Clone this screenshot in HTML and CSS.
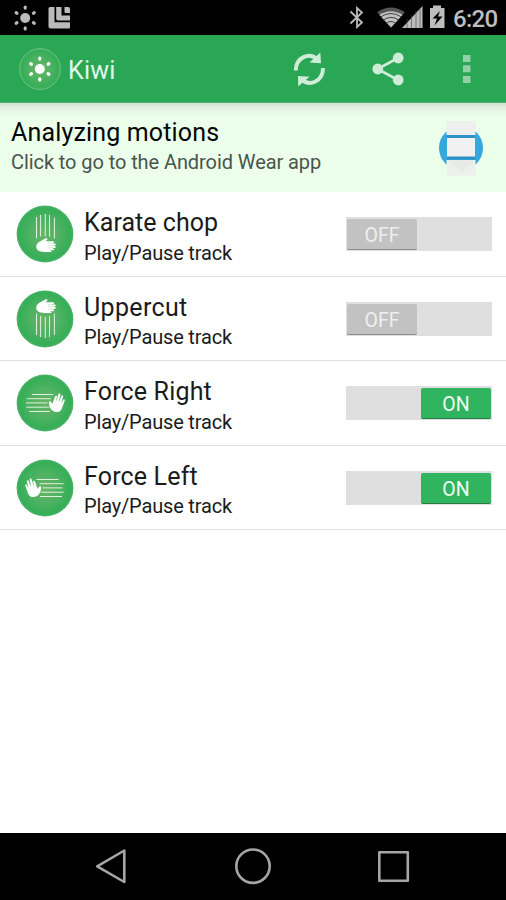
FILE: index.html
```html
<!DOCTYPE html>
<html lang="en">
<head>
<meta charset="utf-8">
<title>Kiwi</title>
<link rel="stylesheet" href="styles.css">
</head>
<body>
<svg class="defs" width="0" height="0" aria-hidden="true">
  <defs>
    <radialGradient id="disc"><stop offset="0" stop-color="#69b465"/><stop offset=".55" stop-color="#4db262"/><stop offset=".9" stop-color="#36ae57"/><stop offset="1" stop-color="#4bb266"/></radialGradient>
    <symbol id="sun" viewBox="0 0 24 26" overflow="visible">
      <circle cx="12" cy="13" r="5"/>
      <ellipse cx="12" cy="2.6" rx="1.6" ry="2.2"/><ellipse cx="12" cy="23.4" rx="1.6" ry="2.2"/>
      <ellipse cx="12" cy="3" rx="1.7" ry="2.1" transform="rotate(60 12 13)"/><ellipse cx="12" cy="3" rx="1.7" ry="2.1" transform="rotate(120 12 13)"/>
      <ellipse cx="12" cy="3" rx="1.7" ry="2.1" transform="rotate(240 12 13)"/><ellipse cx="12" cy="3" rx="1.7" ry="2.1" transform="rotate(300 12 13)"/>
    </symbol>
    <g id="hand-side">
      <path fill="#fff" d="M0 8.500C.2 5.500 2.500 4 5 2.700L9.600.3c1.400-.5 2.200.6 1.200 1.700L9.300 3.300l7.500-.1c1.400 0 1.500 1.600.2 1.800l-2.500.3 4 .2c1.500 0 1.500 1.800.1 1.900l-3.200.2 3.300.4c1.300.3 1.100 1.900-.2 1.900l-3.400-.1 2.200.6c1.100.4.8 1.800-.3 1.800l-3.200.1 1 .4c1 .4.600 1.400-.4 1.400l-6.500-.2C5 13.800.2 13.400 0 8.500z"/>
      <path class="crease" d="M11.500 5.300h4M11.500 7.600h5M11.500 9.900h4.500"/>
    </g>
    <g id="hand-up">
      <path fill="#fff" d="M.1 8.800C0 7.300 1.800 7.400 2.300 8.500l1 1.600.5-.2L6.200 3c.5-1.400 2.200-.9 1.900.5L7.300 7.200l.4.100L9.500 1c.4-1.500 2.300-1 2 .4L10.200 7.700l.4.100 1.900-5.400c.5-1.300 2.200-.7 1.800.7l-1.600 5.800.4.100 1.200-2.600c.6-1.200 2-.5 1.600.8l-2.300 6.200c-1 3.400-2.900 5.400-5 5.200-3.200.1-5.800-1.300-7-3.800C.7 13.100.1 11.100.1 8.800z"/>
    </g>
  </defs>
</svg>
<div class="screen">
  <div class="status">
    <svg width="506" height="35" viewBox="0 0 506 35">
      <g fill="#bbb">
        <use href="#sun" x="13.200" y="5" width="24" height="26"/>
        <path d="M50 7h4.500v15.300H70V27q0 1.500-1.500 1.500h-18q-2 0-2-2v-18q0-1.500 1.500-1.500z"/>
        <path d="M56.200 7h5.300v8.500H70v5H58q-1.800 0-1.800-1.800z"/>
        <path d="M64.500 7H68q2 0 2 2v4h-4q-1.500 0-1.500-1.500z"/>
      </g>
      <path d="M350.500 11.500 362 22.500l-5 4.500V8l5 4.500-11.500 11" fill="none" stroke="#bbb" stroke-width="1.800"/>
      <path d="M377 12.300Q391 2.500 405 12.300L391 27.500z" fill="#555"/>
      <path d="M379.500 15Q391 7.500 402.500 15L391 27.500z" fill="#c0c0c0"/>
      <path d="M380.500 17Q391 10 401.500 17M383 20.200Q391 14.500 399 20.200M386 23.500Q391 19.500 396 23.500" fill="none" stroke="#222" stroke-width=".8"/>
      <path d="M402 28 422.500 6V28z" fill="#bcbcbc"/>
      <path d="M407 19v9M411.500 15v13M416 10v18M420 8v20" stroke="#444" stroke-width=".6"/>
      <path d="M430 8h3V5.500h8V8h3.500v20H430z" fill="#bebebe"/>
      <path d="m440 11-7.500 7.500h4.500l-2.500 7 8-9h-4.500z" fill="#000"/>
    </svg>
    <span class="clock">6:20</span>
  </div>
  <header class="bar">
    <svg class="logo" width="42" height="42" viewBox="0 0 42 42"><circle cx="21" cy="21" r="20.500" fill="url(#disc)" stroke="#66bd7e" stroke-width="1"/><g fill="#fff"><use href="#sun" x="8.800" y="8" width="24" height="26"/></g></svg>
    <span class="brand">Kiwi</span>
    <svg class="actions" width="226" height="67" viewBox="280 35 226 67">
      <g fill="none" stroke="#cfecd8" stroke-width="3.900"><path d="M295.700 70.500C296 57.500 309 51.500 317.500 59.500"/><path d="M323 68C323 81 310 87.500 301 79"/></g>
      <path fill="#cfecd8" d="M320.300 52.500 321 63.200l-11.500-.8zM298.200 86.500 298 76l11.500.8z"/>
      <path d="M398 58 377.500 69 398 80" fill="none" stroke="#cfecd8" stroke-width="2.600"/>
      <g fill="#cfecd8"><circle cx="398.200" cy="58" r="5.400"/><circle cx="377.800" cy="69" r="5.400"/><circle cx="398.200" cy="80" r="5.400"/></g>
      <path fill="#91d1a5" d="M463 55h7.500v7H463zM463 65.300h7.500v7H463zM463 76h7.500v7H463z"/>
    </svg>
  </header>
  <section class="banner">
    <div class="banner-text"><div class="headline">Analyzing motions</div><div class="sub">Click to go to the Android Wear app</div></div>
    <svg class="wear" width="50" height="60" viewBox="0 0 50 60">
      <circle cx="25" cy="31" r="22" fill="#34a7df"/>
      <path fill="#edf0ec" d="M10.500 4h29v14h-29zM10.500 43h29v15.500h-29z"/>
      <path fill="#2b93c8" d="M11 18h28v3H11zM11 39h28v3.500H11z"/>
      <path fill="#e5e7e4" d="m12 43.500 14 11.500 13-11.500z" opacity=".7"/>
      <path fill="#f1f1f1" d="M11 21h28v18.500H11z"/>
    </svg>
  </section>
  <main class="list">
    <div class="row">
      <svg class="icon" width="58" height="58" viewBox="0 0 58 58"><circle cx="29" cy="29" r="28.400" fill="url(#disc)"/><path class="trail" d="M20.500 12v21.500M24.600 10v21.500M29.300 9v22.500M33.500 10v21.500M38.400 12.500v21"/><use href="#hand-side" x="20.200" y="33"/></svg>
      <div class="label"><div class="name chop">Karate chop</div><div class="detail">Play/Pause track</div></div>
      <div class="switch"><span class="thumb">OFF</span></div>
    </div>
    <div class="row">
      <svg class="icon" width="58" height="58" viewBox="0 0 58 58"><circle cx="29" cy="29" r="28.400" fill="url(#disc)"/><path class="trail" d="M20.500 23.500v21.500M24.600 26v21M29.300 27v21M33.500 26v21M38.400 23.500v21.500"/><use href="#hand-side" x="20.200" y="9"/></svg>
      <div class="label"><div class="name upper">Uppercut</div><div class="detail">Play/Pause track</div></div>
      <div class="switch"><span class="thumb">OFF</span></div>
    </div>
    <div class="row">
      <svg class="icon" width="58" height="58" viewBox="0 0 58 58"><circle cx="29" cy="29" r="28.400" fill="url(#disc)"/><path class="trail" d="M16 20.500h21M10.700 24.700h24M10 28.900h21.500M10.300 33.200h23M13 37.500h21"/><use href="#hand-up" x="32.800" y="19.500"/></svg>
      <div class="label"><div class="name">Force Right</div><div class="detail">Play/Pause track</div></div>
      <div class="switch on"><span class="thumb">ON</span></div>
    </div>
    <div class="row">
      <svg class="icon" width="58" height="58" viewBox="0 0 58 58"><circle cx="29" cy="29" r="28.400" fill="url(#disc)"/><g transform="matrix(-1 0 0 1 58 0)"><path class="trail" d="M15.500 20.500h22M10.300 24.700h24M11.500 28.900h20M10.300 33.200h23M12 37.500h22"/><use href="#hand-up" x="32.800" y="19.500"/></g></svg>
      <div class="label"><div class="name">Force Left</div><div class="detail">Play/Pause track</div></div>
      <div class="switch on"><span class="thumb">ON</span></div>
    </div>
  </main>
  <nav class="nav">
    <svg width="506" height="67" viewBox="0 833 506 67" fill="none" stroke="#a5a5a5" stroke-width="2.600" stroke-linejoin="round"><path d="M97.200 866.300 124.300 850.500v31.500z"/><circle cx="253" cy="866.200" r="16.700"/><path d="M379.300 852.200h28.500v28.500h-28.500z"/></svg>
  </nav>
</div>
</body>
</html>
```
FILE: styles.css
```css
* { box-sizing: border-box; }
body { margin: 0; background: #fff; font-family: Roboto, sans-serif; }
.defs { display: block; height: 0; }
.screen { width: 506px; height: 900px; display: flex; flex-direction: column; background: #fff; overflow: hidden; }
.status { position: relative; height: 35px; flex: none; background: #000; }
.status svg, .nav svg { display: block; }
.clock { position: absolute; left: 453px; top: 4px; color: #bebebe; font-size: 24px; line-height: 30px; font-weight: 500; letter-spacing: -0.7px; }
.bar { height: 68px; flex: none; background: #29a755; display: flex; align-items: center; padding-left: 19px; border-bottom: 1px solid #4fae6f; }
.logo { margin-right: 7px; }
.brand { color: #e3f6e9; font-size: 25px; line-height: 30px; padding-top: 4px; letter-spacing: 0.2px; }
.actions { margin-left: auto; }
.banner { height: 89px; flex: none; display: flex; justify-content: space-between; padding: 14px 20px 0 11px; background: linear-gradient(#cfe0cf 0, #deefde 4px, #e8f8e8 9px, #ebffeb 16px); }
.headline { color: #050505; font-size: 25px; line-height: 32px; letter-spacing: 0.16px; }
.sub { color: #4b544b; font-size: 20px; line-height: 26px; letter-spacing: -0.08px; }
.wear { flex: none; }
.list { height: 338px; flex: none; display: grid; grid-template-rows: repeat(4, 1fr); }
.row { display: flex; align-items: flex-start; padding: 13px 14px 0 16px; border-bottom: 1px solid #e0e0e0; }
.icon { flex: none; }
.trail { fill: none; stroke: #dff2df; stroke-width: 1; }
.crease { fill: none; stroke: #8fce99; stroke-width: .4; }
.label { margin-left: 10px; padding-top: 3px; color: #1b1b1b; }
.name { font-size: 25px; line-height: 30px; letter-spacing: 0.17px; }
.chop { letter-spacing: 0.05px; }
.upper { letter-spacing: 0.35px; }
.detail { font-size: 20px; line-height: 26px; margin-top: 1.500px; letter-spacing: -0.17px; }
.switch { width: 146px; height: 34px; margin: 12px 0 0 auto; padding: 2px 1px 1px; background: #dfdfdf; display: flex; }
.thumb { width: 70px; height: 31px; border-radius: 2px; border-bottom: 1px solid #8e8e8e; background: #c2c2c2; color: #efefef; font-size: 19.500px; line-height: 33px; text-align: center; }
.on { justify-content: flex-end; }
.on .thumb { background: #31b45f; border-bottom-color: #237b43; color: #effcf3; }
.nav { margin-top: auto; height: 67px; flex: none; background: #000; }
```
